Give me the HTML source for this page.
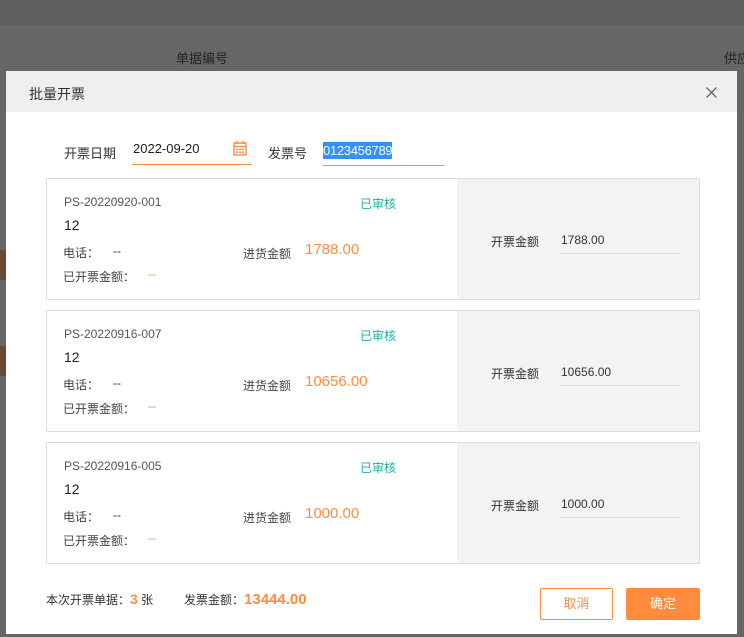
<!DOCTYPE html><html><head><meta charset="utf-8"><style>
*{margin:0;padding:0;box-sizing:border-box}
body{width:744px;height:637px;overflow:hidden;background:#5f5f5f;font-family:"Liberation Sans","Noto Sans CJK SC",sans-serif;position:relative;color:#333}
.abs{position:absolute}
.bgtop{left:0;top:25px;width:744px;height:612px;background:#666}
.modal{left:6px;top:71px;width:731px;height:563px;background:#fff}
.hdr{left:0;top:0;width:731px;height:41px;background:#efefef}
.t{font-size:13px;white-space:nowrap}
.card{left:40px;width:654px;height:122px;border:1px solid #ddd;background:#fff;overflow:hidden}
.card .gray{position:absolute;left:410px;top:0;width:242px;height:120px;background:#f3f3f3}
.org{color:#ff8b3d}
</style></head><body>
<div class="abs bgtop"></div>
<div class="abs t" style="left:176px;top:48px;color:#222">单据编号</div>
<div class="abs t" style="left:724px;top:48px;color:#222">供应</div>
<div class="abs" style="left:0;top:250px;width:6px;height:30px;background:#6b4a35"></div>
<div class="abs" style="left:0;top:346px;width:6px;height:30px;background:#6b4a35"></div>
<div class="abs modal">
 <div class="abs hdr"></div>
 <div class="abs t" style="left:23px;top:13px;font-size:14px;color:#333">批量开票</div>
 <svg class="abs" style="left:700px;top:16px" width="11" height="11" viewBox="0 0 11 11"><path d="M0.5 0.5L10.5 10.5M10.5 0.5L0.5 10.5" stroke="#555" stroke-width="1.2"/></svg>
 <div class="abs t" style="left:58px;top:72px;color:#333">开票日期</div>
 <div class="abs t" style="left:127px;top:70px;color:#222">2022-09-20</div>
 <svg class="abs" style="left:227px;top:69px" width="14" height="16" viewBox="0 0 14 16"><rect x="1" y="3" width="12" height="12" fill="none" stroke="#ff8b3d" stroke-width="1.4"/><line x1="1" y1="6.5" x2="13" y2="6.5" stroke="#ff8b3d" stroke-width="1.4"/><line x1="4" y1="1" x2="4" y2="4" stroke="#ff8b3d" stroke-width="1.4"/><line x1="10" y1="1" x2="10" y2="4" stroke="#ff8b3d" stroke-width="1.4"/><g fill="#ff8b3d"><rect x="3" y="8.5" width="2" height="1.5"/><rect x="6" y="8.5" width="2" height="1.5"/><rect x="9" y="8.5" width="2" height="1.5"/><rect x="3" y="11.5" width="2" height="1.5"/><rect x="6" y="11.5" width="2" height="1.5"/><rect x="9" y="11.5" width="2" height="1.5"/></g></svg>
 <div class="abs" style="left:126px;top:93px;width:120px;height:1px;background:#ff8b3d"></div>
 <div class="abs t" style="left:262px;top:72px;color:#333">发票号</div>
 <div class="abs t" style="left:317px;top:71px;color:#fff;background:#3390ff;line-height:17px;letter-spacing:-0.3px">0123456789</div>
 <div class="abs" style="left:317px;top:94px;width:121px;height:1px;background:#ff8b3d"></div>

 <div class="abs card" style="top:107px"><div class="gray"></div>
  <div class="abs t" style="left:17px;top:16px;font-size:12px;color:#555">PS-20220920-001</div>
  <div class="abs t" style="left:313px;top:16px;font-size:12px;color:#19b1a3">已审核</div>
  <div class="abs t" style="left:17px;top:38px;font-size:14px;color:#222">12</div>
  <div class="abs t" style="left:16px;top:65px;font-size:12px;color:#444">电话：</div>
  <div class="abs t" style="left:66px;top:65px;font-size:12px;color:#333">--</div>
  <div class="abs t" style="left:196px;top:66px;font-size:12px;color:#444">进货金额</div>
  <div class="abs t org" style="left:258px;top:62px;font-size:15px">1788.00</div>
  <div class="abs t" style="left:16px;top:89px;font-size:12px;color:#444">已开票金额：</div>
  <div class="abs t org" style="left:101px;top:88px;font-size:12px">--</div>
  <div class="abs t" style="left:444px;top:54px;font-size:12px;color:#333">开票金额</div>
  <div class="abs t" style="left:514px;top:54px;font-size:12px;color:#333">1788.00</div>
  <div class="abs" style="left:513px;top:74px;width:120px;height:1px;background:#ddd"></div>
 </div>
 <div class="abs card" style="top:239px"><div class="gray"></div>
  <div class="abs t" style="left:17px;top:16px;font-size:12px;color:#555">PS-20220916-007</div>
  <div class="abs t" style="left:313px;top:16px;font-size:12px;color:#19b1a3">已审核</div>
  <div class="abs t" style="left:17px;top:38px;font-size:14px;color:#222">12</div>
  <div class="abs t" style="left:16px;top:65px;font-size:12px;color:#444">电话：</div>
  <div class="abs t" style="left:66px;top:65px;font-size:12px;color:#333">--</div>
  <div class="abs t" style="left:196px;top:66px;font-size:12px;color:#444">进货金额</div>
  <div class="abs t org" style="left:258px;top:62px;font-size:15px">10656.00</div>
  <div class="abs t" style="left:16px;top:89px;font-size:12px;color:#444">已开票金额：</div>
  <div class="abs t org" style="left:101px;top:88px;font-size:12px">--</div>
  <div class="abs t" style="left:444px;top:54px;font-size:12px;color:#333">开票金额</div>
  <div class="abs t" style="left:514px;top:54px;font-size:12px;color:#333">10656.00</div>
  <div class="abs" style="left:513px;top:74px;width:120px;height:1px;background:#ddd"></div>
 </div>
 <div class="abs card" style="top:371px"><div class="gray"></div>
  <div class="abs t" style="left:17px;top:16px;font-size:12px;color:#555">PS-20220916-005</div>
  <div class="abs t" style="left:313px;top:16px;font-size:12px;color:#19b1a3">已审核</div>
  <div class="abs t" style="left:17px;top:38px;font-size:14px;color:#222">12</div>
  <div class="abs t" style="left:16px;top:65px;font-size:12px;color:#444">电话：</div>
  <div class="abs t" style="left:66px;top:65px;font-size:12px;color:#333">--</div>
  <div class="abs t" style="left:196px;top:66px;font-size:12px;color:#444">进货金额</div>
  <div class="abs t org" style="left:258px;top:62px;font-size:15px">1000.00</div>
  <div class="abs t" style="left:16px;top:89px;font-size:12px;color:#444">已开票金额：</div>
  <div class="abs t org" style="left:101px;top:88px;font-size:12px">--</div>
  <div class="abs t" style="left:444px;top:54px;font-size:12px;color:#333">开票金额</div>
  <div class="abs t" style="left:514px;top:54px;font-size:12px;color:#333">1000.00</div>
  <div class="abs" style="left:513px;top:74px;width:120px;height:1px;background:#ddd"></div>
 </div>

 <div class="abs t" style="left:40px;top:520px;font-size:12px;color:#333">本次开票单据：<b class="org" style="font-size:14px">3</b> 张</div>
 <div class="abs t" style="left:178px;top:520px;font-size:12px;color:#333">发票金额：<b class="org" style="font-size:15px">13444.00</b></div>
 <div class="abs t" style="left:534px;top:517px;width:73px;height:32px;border:1px solid #ff8b3d;border-radius:2px;color:#ff8b3d;text-align:center;line-height:30px">取消</div>
 <div class="abs t" style="left:620px;top:517px;width:74px;height:32px;background:#ff8b3d;border-radius:2px;color:#fff;text-align:center;line-height:32px">确定</div>
</div>
</body></html>
